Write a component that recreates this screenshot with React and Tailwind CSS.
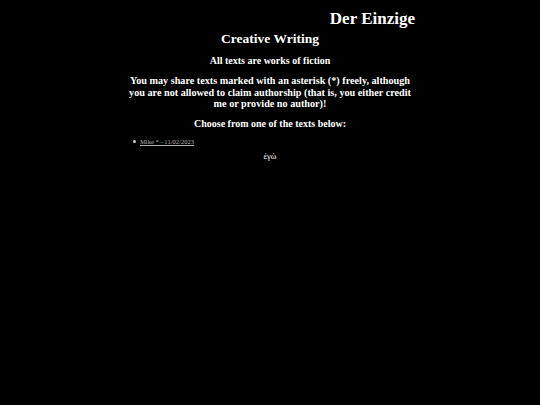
import React from 'react';

const App = () => {
  return (
    <div className="min-h-[405px] bg-black text-white" style={{ fontFamily: '"Liberation Serif", "DejaVu Serif", serif' }}>
      <div className="mx-auto w-[290px] pt-[9px]">
        <div className="text-right text-[17px] font-bold leading-[20px]">Der Einzige</div>
        <h1 className="text-center text-[13.5px] font-bold leading-[16px] mt-[2px]">Creative Writing</h1>
        <h2 className="text-center text-[10px] font-bold leading-[12px] mt-[8px]">All texts are works of fiction</h2>
        <p className="text-center text-[10.2px] font-bold leading-[11.5px] mt-[8px] px-[4px]">
          You may share texts marked with an asterisk (*) freely, although you are not allowed to claim authorship (that is, you either credit me or provide no author)!
        </p>
        <h2 className="text-center text-[10px] font-bold leading-[12px] mt-[8px]">Choose from one of the texts below:</h2>
        <ul className="mt-[8px] pl-[8px] text-[6.6px] leading-[8px]">
          <li className="flex items-center gap-[4px]">
            <span className="w-[3px] h-[3px] rounded-full bg-[#cccccc]" />
            <a href="#" className="underline text-[#b0b0b0]">Mike * - 11/02/2023</a>
          </li>
        </ul>
        <div className="text-center text-[8.5px] leading-[9px] mt-[6.5px]">ἐγώ</div>
      </div>
    </div>
  );
};

export default App;
